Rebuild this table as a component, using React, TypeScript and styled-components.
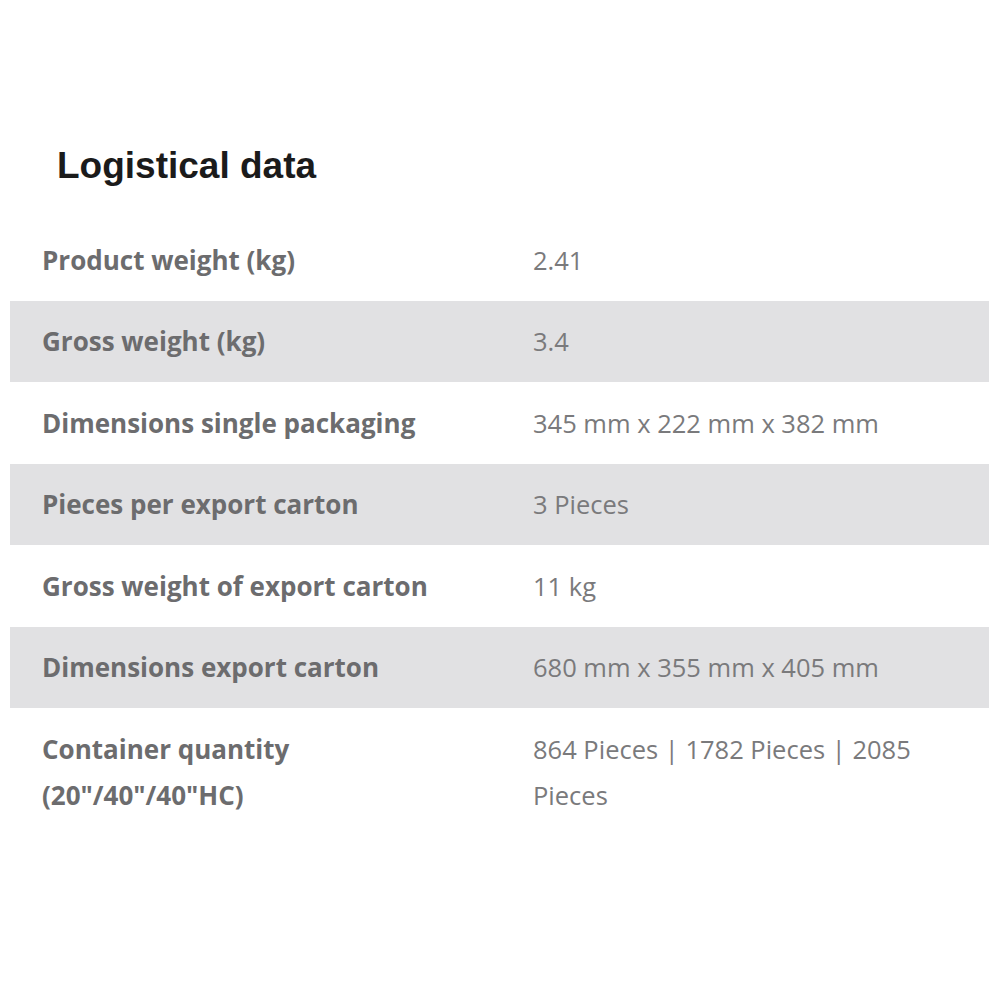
import styled, { createGlobalStyle } from 'styled-components'

const GlobalStyle = createGlobalStyle`
  body {
    margin: 0;
    background: #ffffff;
  }
`

const Page = styled.div`
  width: 1000px;
  padding: 141px 11px 0 10px;
  box-sizing: border-box;
`

const Title = styled.h2`
  margin: 0 0 28px 47px;
  font-family: "Liberation Sans", Arial, sans-serif;
  font-weight: 700;
  font-size: 37px;
  line-height: 50px;
  color: #1b1b1b;
`

const Table = styled.div`
  display: flex;
  flex-direction: column;
`

const Row = styled.div<{ $shaded: boolean }>`
  display: grid;
  grid-template-columns: 491px 1fr;
  padding: 17.75px 0;
  background: ${p => (p.$shaded ? '#e1e1e3' : 'transparent')};
  font-family: "Open Sans", sans-serif;
  line-height: 46px;
`

const Label = styled.div`
  padding: 0 32px;
  font-size: 26px;
  font-weight: 700;
  color: #6c6c6e;
`

const Value = styled.div`
  padding: 0 32px;
  font-size: 25.5px;
  font-weight: 400;
  color: #7a7a7c;
`

const rows: [string, string][] = [
  ['Product weight (kg)', '2.41'],
  ['Gross weight (kg)', '3.4'],
  ['Dimensions single packaging', '345 mm x 222 mm x 382 mm'],
  ['Pieces per export carton', '3 Pieces'],
  ['Gross weight of export carton', '11 kg'],
  ['Dimensions export carton', '680 mm x 355 mm x 405 mm'],
  ['Container quantity (20"/40"/40"HC)', '864 Pieces | 1782 Pieces | 2085 Pieces'],
]

const App = () => {
  return (
    <Page>
      <GlobalStyle />
      <Title>Logistical data</Title>
      <Table>
        {rows.map(([label, value], i) => (
          <Row key={label} $shaded={i % 2 === 1}>
            <Label>{label}</Label>
            <Value>{value}</Value>
          </Row>
        ))}
      </Table>
    </Page>
  )
}

export default App
